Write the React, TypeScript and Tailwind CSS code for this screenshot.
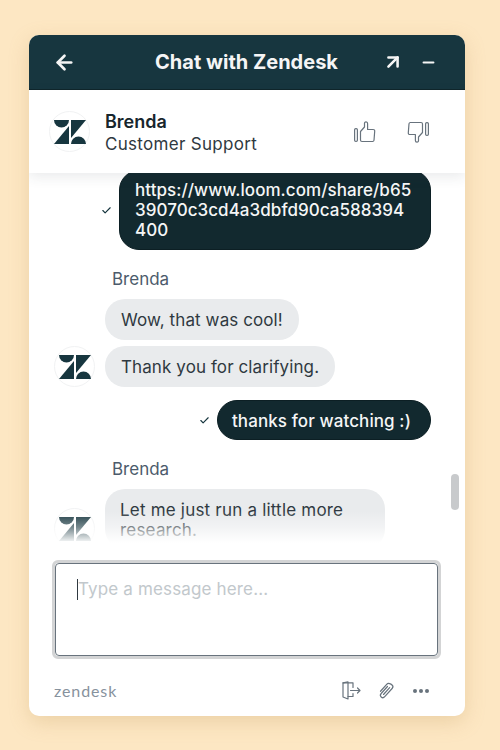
import React from 'react';
import { ArrowLeft, ArrowUpRight, Minus, Check } from 'lucide-react';

const ZendeskMark = ({ color = '#17363f' }: { color?: string }) => (
  <svg width="32" height="24" viewBox="0 0 32 24" fill={color}>
    <path d="M0 0H15A7.5 7.5 0 0 1 0 0Z" />
    <path d="M17 0H32L17 18Z" />
    <path d="M15 6V24H0Z" />
    <path d="M17 24A7.5 7.5 0 0 1 32 24Z" />
  </svg>
);

const Avatar = () => (
  <div className="w-[41px] h-[41px] shrink-0 rounded-full border border-[#f1f2f3] bg-white flex items-center justify-center">
    <ZendeskMark />
  </div>
);

const ThumbIcon = ({ className }: { className?: string }) => (
  <svg width="22" height="22" viewBox="0 0 22 22" fill="none" stroke="#68737d" strokeWidth="1.2" strokeLinejoin="round" strokeLinecap="round" className={className}>
    <rect x="0.6" y="7.6" width="2.8" height="12.8" rx="1.2" />
    <path d="M6.5 19V10.5L10.5 6V2.2C10.5 0.4 13.6 0.4 13.6 2.6V8.5H19C20.2 8.5 20.8 9 20.7 10.2L20 19.2C19.9 20 19.4 20.5 18.6 20.5H8C7 20.5 6.5 20 6.5 19Z" />
  </svg>
);

const EndChat = () => (
  <svg width="19" height="19" viewBox="0 0 19 19" fill="none" stroke="#68737d" strokeWidth="1.2" strokeLinejoin="round" strokeLinecap="round">
    <path d="M11 6.5V1.8H1V16L6 18V15.5H11V12.5" />
    <path d="M1 1.8L6 0.8V15.5" />
    <path d="M8.5 9.5H18M15.5 7L18 9.5L15.5 12" />
  </svg>
);

const ClipIcon = () => (
  <svg width="17" height="18" viewBox="0 0 17 18" fill="none" stroke="#68737d" strokeWidth="1.2" strokeLinecap="round" strokeLinejoin="round">
    <g transform="rotate(42 8.5 9)">
      <path d="M6.2 5V14.4C6.2 16 7.2 17 8.6 17C10 17 11 16 11 14.4V3.4C11 1.8 10 0.8 8.6 0.8C7.2 0.8 4.2 1.6 4.2 3.6V13.2" />
      <path d="M8.6 4.4V13.6" />
    </g>
  </svg>
);

const SentRow = ({ children, bubble }: { children: React.ReactNode; bubble: string }) => (
  <div className="flex items-center justify-end gap-[7px] pr-[34px]">
    <Check size={11} strokeWidth={2.5} className="text-[#17363f]" />
    <div className={`bg-[#12292f] border border-[#0c1f24] text-[#f5f6f6] ${bubble}`}>{children}</div>
  </div>
);

const received = 'bg-[#e9ebed] text-[#2f3941] px-[16px] pt-[11px] pb-[9px] text-[17px] tracking-[0.1px] leading-[21px] rounded-[20px]';

export default function App() {
  return (
    <div className="min-h-screen bg-[#fde7c3] pt-[35px] pl-[29px] font-['Inter',sans-serif]">
      <div className="w-[436px] h-[681px] bg-white rounded-[10px] overflow-hidden flex flex-col shadow-[0_6px_20px_rgba(190,150,90,0.28)]">
        <div className="h-[55px] shrink-0 bg-[#17363f] border-b border-[#0f252b] flex items-center text-[#f5f5f5] pl-[24px] pr-[28px]">
          <ArrowLeft size={23} strokeWidth={2.8} />
          <div className="flex-1 text-center text-[20px] font-bold leading-none pl-[35px]">Chat with Zendesk</div>
          <ArrowUpRight size={22} strokeWidth={2.8} className="mr-[16px]" />
          <Minus size={17} strokeWidth={2.8} />
        </div>

        <div className="h-[83px] shrink-0 relative z-10 bg-white flex items-center pl-[20px] pr-[36px] shadow-[0_4px_12px_rgba(47,57,65,0.1)]">
          <Avatar />
          <div className="flex-1 ml-[15px] pt-[2px] text-[17px] tracking-[0.3px] leading-[22px] text-[#2f3941]">
            <div className="text-[18px] tracking-normal font-semibold text-[#17262d]">Brenda</div>
            <div>Customer Support</div>
          </div>
          <ThumbIcon />
          <div className="w-[31px]" />
          <ThumbIcon className="rotate-180" />
        </div>

        <div className="h-[370px] shrink-0 relative overflow-hidden">
          <div className="-mt-[3px]">
            <SentRow bubble="w-[312px] rounded-[20px] px-[15px] py-[9px] text-[17px] font-[450] tracking-[0.05px] leading-[20px]">
              https://www.loom.com/share/b65
              <br />
              39070c3cd4a3dbfd90ca588394
              <br />
              400
            </SentRow>
          </div>

          <div className="ml-[83px] mt-[19px] text-[17px] leading-[20px] text-[#4c5b6b]">Brenda</div>
          <div className="flex items-end gap-[10px] pl-[25px] mt-[10px]">
            <Avatar />
            <div className="flex flex-col items-start gap-[6px]">
              <div className={received}>Wow, that was cool!</div>
              <div className={received}>Thank you for clarifying.</div>
            </div>
          </div>

          <div className="mt-[13px]">
            <SentRow bubble="rounded-[20px] pl-[14px] pr-[19px] pt-[10px] pb-[8px] text-[17px] font-[450] tracking-[0.1px] leading-[20px]">thanks for watching :)</SentRow>
          </div>

          <div className="ml-[83px] mt-[19px] text-[17px] leading-[20px] text-[#4c5b6b]">Brenda</div>
          <div className="flex items-end gap-[10px] pl-[25px] mt-[10px]">
            <Avatar />
            <div className={`${received} w-[280px] !px-[15px] !pt-[11px] !leading-[20px] !tracking-[0.2px]`}>Let me just run a little more research.</div>
          </div>

          <div className="absolute left-[422px] top-[301px] w-[8px] h-[36px] rounded-full bg-[#c8cacc]" />
          <div className="absolute left-0 right-0 bottom-0 h-[32px] bg-gradient-to-b from-white/0 via-white/40 to-white" />
        </div>

        <div className="mt-[17px] ml-[23px] w-[389px] h-[99px] shrink-0 rounded-[6px] border-[3px] border-[#d3d4d5] bg-white">
          <div className="h-full rounded-[4px] border border-[#68737d] pl-[21px] pt-[15px] flex items-start">
            <div className="w-px h-[21px] bg-[#2f3941]" />
            <div className="text-[17px] tracking-[0.15px] leading-[21px] text-[#c2c8cc]">Type a message here...</div>
          </div>
        </div>

        <div className="flex-1 flex items-center pt-[6px] pl-[25px] pr-[36px]">
          <div className="flex-1 font-['Lato',sans-serif] text-[16px] tracking-[0.9px] text-[#87929d] leading-none">zendesk</div>
          <EndChat />
          <div className="ml-[17px]">
            <ClipIcon />
          </div>
          <div className="ml-[18px] flex gap-[2px]">
            <div className="w-[4px] h-[4px] rounded-full bg-[#68737d]" />
            <div className="w-[4px] h-[4px] rounded-full bg-[#68737d]" />
            <div className="w-[4px] h-[4px] rounded-full bg-[#68737d]" />
          </div>
        </div>
      </div>
    </div>
  );
}
